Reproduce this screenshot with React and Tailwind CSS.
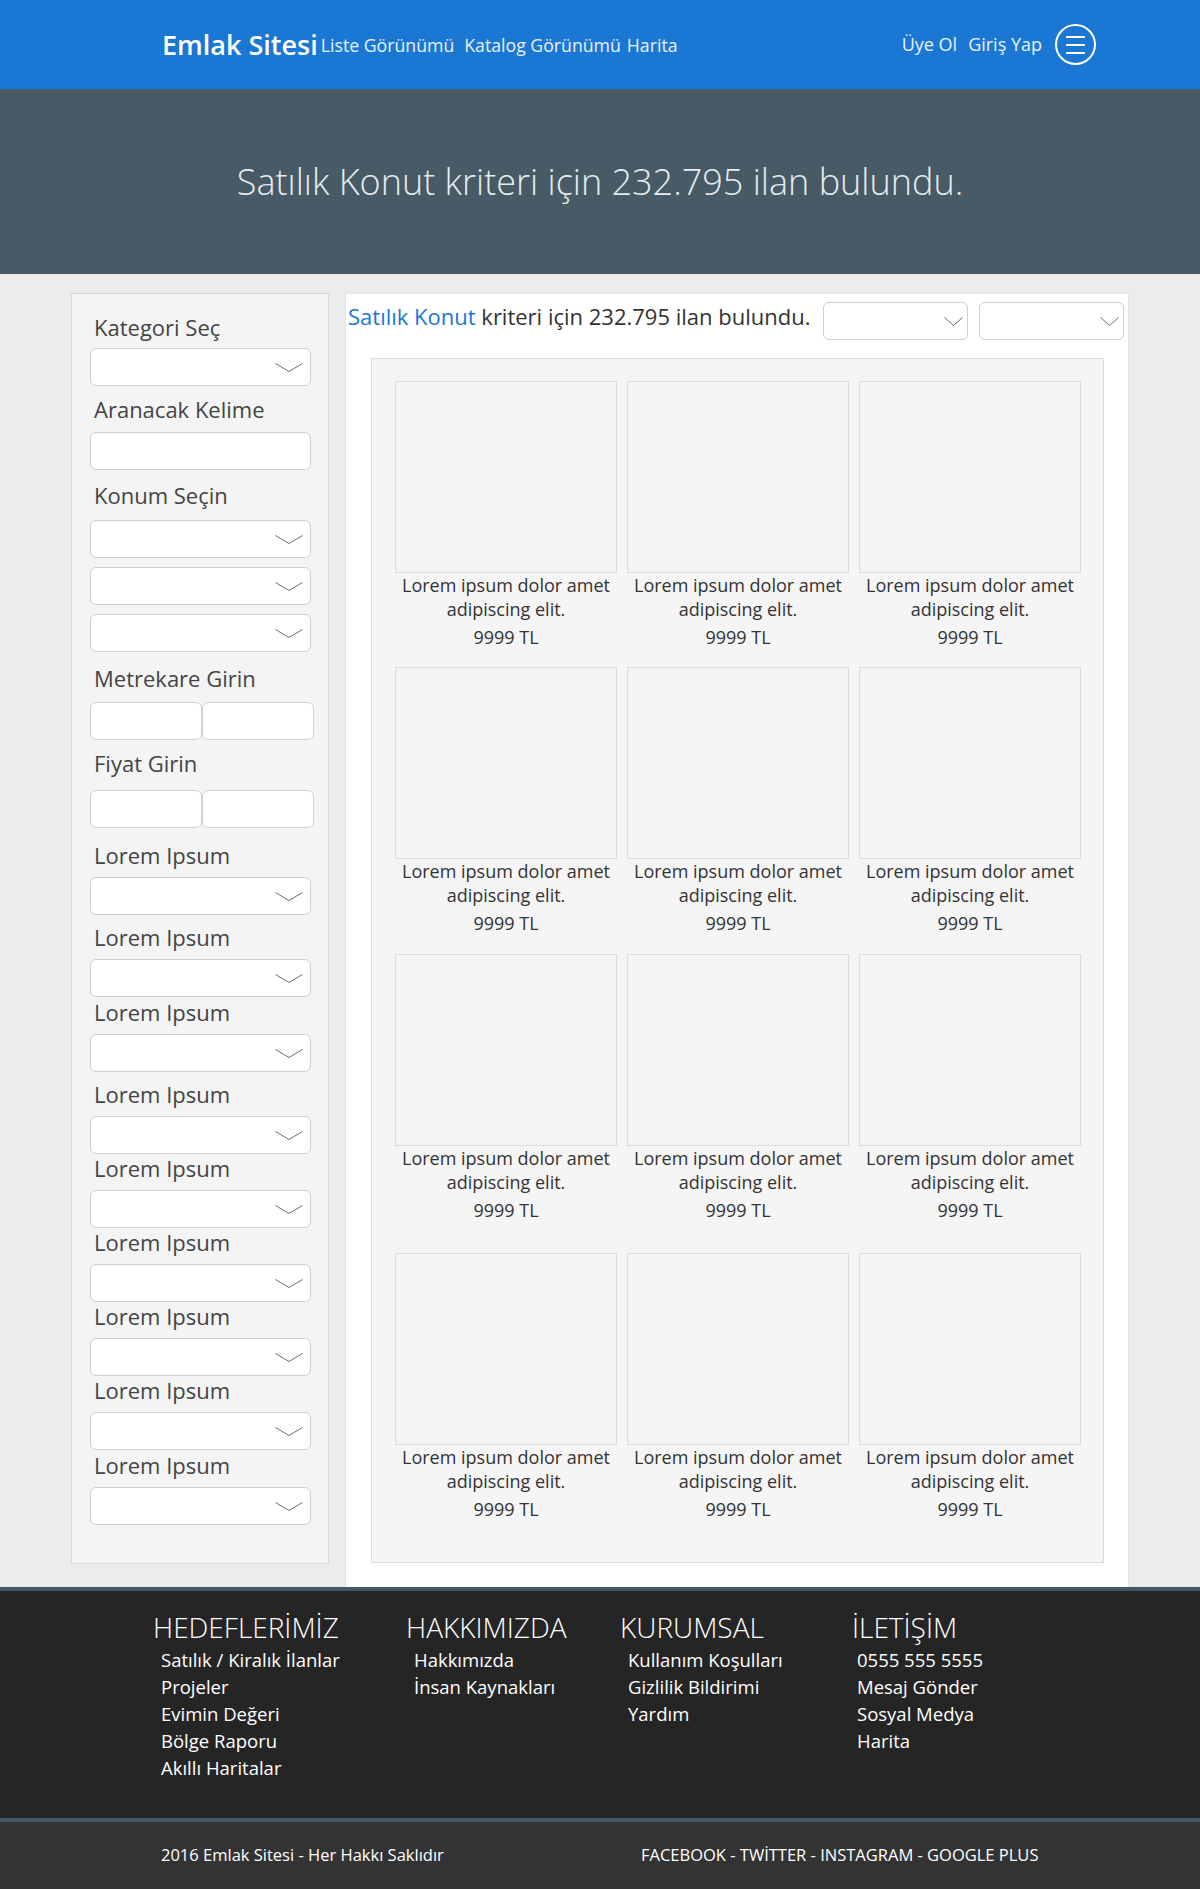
import React from 'react'

const Chevron = ({ w, h }) => (
  <svg width={w} height={h} viewBox={`0 0 ${w} ${h}`}>
    <polyline points={`0.5,0.5 ${w / 2},${h - 0.5} ${w - 0.5},0.5`} fill="none" stroke="#6b6b6b" strokeWidth="1" />
  </svg>
)

function Select({ className = '' }) {
  return (
    <div className={`h-[38px] w-[221px] bg-white border border-[#cfcfcf] rounded-[6px] flex items-center justify-end pr-[7px] ${className}`}>
      <Chevron w={28} h={9} />
    </div>
  )
}

function Label({ children, className = '' }) {
  return <div className={`h-[30px] leading-[30px] text-[22px] text-[#444] pl-[4px] ${className}`}>{children}</div>
}

const loremGaps = ['mt-[12px]', 'mt-[7px]', 'mt-0', 'mt-[7px]', 'mt-[-1px]', 'mt-[-1px]', 'mt-[-1px]', 'mt-[-1px]', 'mt-0']
const rowGaps = ['mt-0', 'mt-[18px]', 'mt-[19px]', 'mt-[31px]']

function Card() {
  return (
    <div className="w-[222px] text-center text-[#333]">
      <div className="h-[192px] border border-[#dcdcdc] bg-[#f5f5f5]" />
      <div className="text-[18px] leading-[24px]">
        <div>Lorem ipsum dolor amet</div>
        <div>adipiscing elit.</div>
      </div>
      <div className="mt-[4px] text-[18px] leading-[24px]">9999 TL</div>
    </div>
  )
}

export default function App() {
  return (
    <div className="w-[1200px] bg-[#ebecee] font-['Open_Sans',sans-serif]">
      {/* header */}
      <header className="h-[89px] bg-[#1a77d3] flex items-center pl-[162px] pr-[104px] text-white">
        <div className="text-[27px] font-semibold leading-none">Emlak Sitesi</div>
        <nav className="flex items-center ml-[3px] text-[17.7px] text-white/90 mt-[2px]">
          <span>Liste Görünümü</span>
          <span className="ml-[10px]">Katalog Görünümü</span>
          <span className="ml-[6px]">Harita</span>
        </nav>
        <div className="ml-auto flex items-center text-[18px] text-white/90">
          <span>Üye Ol</span>
          <span className="ml-[11px]">Giriş Yap</span>
          <div className="ml-[13px] w-[41px] h-[41px] rounded-full border-2 border-white flex flex-col items-center justify-center gap-[6px]">
            <div className="w-[19px] h-[2px] bg-white" />
            <div className="w-[19px] h-[2px] bg-white" />
            <div className="w-[19px] h-[2px] bg-white" />
          </div>
        </div>
      </header>

      {/* hero */}
      <section className="h-[185px] bg-[#475a65] flex items-center justify-center">
        <h1 className="text-[36px] font-light text-[#e6ecf0]">Satılık Konut kriteri için 232.795 ilan bulundu.</h1>
      </section>

      {/* content */}
      <div className="flex items-start pt-[19px] pl-[71px] gap-[16px]">
        <aside className="w-[258px] bg-[#f4f4f4] border border-[#dadada] pt-[18px] pb-[38px] pl-[18px]">
          <Label>Kategori Seç</Label>
          <Select className="mt-[6px]" />
          <Label className="mt-[8px]">Aranacak Kelime</Label>
          <div className="mt-[8px] h-[38px] w-[221px] bg-white border border-[#cfcfcf] rounded-[6px]" />
          <Label className="mt-[10px]">Konum Seçin</Label>
          <Select className="mt-[10px]" />
          <Select className="mt-[9px]" />
          <Select className="mt-[9px]" />
          <Label className="mt-[11px]">Metrekare Girin</Label>
          <div className="mt-[9px] flex">
            <div className="h-[38px] w-[112px] bg-white border border-[#cfcfcf] rounded-[6px]" />
            <div className="h-[38px] w-[112px] bg-white border border-[#cfcfcf] rounded-[6px]" />
          </div>
          <Label className="mt-[8px]">Fiyat Girin</Label>
          <div className="mt-[12px] flex">
            <div className="h-[38px] w-[112px] bg-white border border-[#cfcfcf] rounded-[6px]" />
            <div className="h-[38px] w-[112px] bg-white border border-[#cfcfcf] rounded-[6px]" />
          </div>
          {loremGaps.map((g, i) => (
            <div key={i} className={g}>
              <Label>Lorem Ipsum</Label>
              <Select className="mt-[7px]" />
            </div>
          ))}
        </aside>

        <main className="w-[784px] bg-white border border-[#e2e2e2] border-b-0 pb-[24px]">
          <div className="flex items-start pt-[8px] pl-[2px] pr-[4px]">
            <div className="mt-[-1px] h-[30px] leading-[30px] text-[22px] text-[#333]">
              <span className="text-[#1a77d3]">Satılık Konut</span> kriteri için 232.795 ilan bulundu.
            </div>
            <div className="ml-auto flex gap-[11px]">
              {[0, 1].map(i => (
                <div key={i} className="h-[38px] w-[145px] bg-white border border-[#cfcfcf] rounded-[6px] flex items-center justify-end pr-[4px]">
                  <Chevron w={19} h={9} />
                </div>
              ))}
            </div>
          </div>

          <div className="mt-[18px] ml-[25px] w-[733px] bg-[#f5f5f5] border border-[#dcdcdc] pt-[22px] pb-[41px] pl-[23px]">
            {rowGaps.map((g, r) => (
              <div key={r} className={`flex gap-[10px] ${g}`}>
                <Card />
                <Card />
                <Card />
              </div>
            ))}
          </div>
        </main>
      </div>

      {/* footer */}
      <footer className="bg-[#252525] border-t-4 border-[#46555f] text-white">
        <div className="flex pl-[153px] pt-[18px] pb-[37px]">
          <div className="w-[253px]">
            <h3 className="text-[28px] font-light leading-[36px]">HEDEFLERİMİZ</h3>
            <ul className="mt-[1px] pl-[8px] text-[18.5px] leading-[27px]">
              <li>Satılık / Kiralık İlanlar</li>
              <li>Projeler</li>
              <li>Evimin Değeri</li>
              <li>Bölge Raporu</li>
              <li>Akıllı Haritalar</li>
            </ul>
          </div>
          <div className="w-[214px]">
            <h3 className="text-[28px] font-light leading-[36px]">HAKKIMIZDA</h3>
            <ul className="mt-[1px] pl-[8px] text-[18.5px] leading-[27px]">
              <li>Hakkımızda</li>
              <li>İnsan Kaynakları</li>
            </ul>
          </div>
          <div className="w-[232px]">
            <h3 className="text-[28px] font-light leading-[36px]">KURUMSAL</h3>
            <ul className="mt-[1px] pl-[8px] text-[18.5px] leading-[27px]">
              <li>Kullanım Koşulları</li>
              <li>Gizlilik Bildirimi</li>
              <li>Yardım</li>
            </ul>
          </div>
          <div>
            <h3 className="text-[28px] font-light leading-[36px]">İLETİŞİM</h3>
            <ul className="mt-[1px] pl-[5px] text-[18.5px] leading-[27px]">
              <li>0555 555 5555</li>
              <li>Mesaj Gönder</li>
              <li>Sosyal Medya</li>
              <li>Harita</li>
            </ul>
          </div>
        </div>
      </footer>
      <div className="h-[71px] bg-[#333333] border-t-4 border-[#46555f] flex items-center pl-[161px] text-white text-[16.5px]">
        <span className="w-[480px]">2016 Emlak Sitesi - Her Hakkı Saklıdır</span>
        <span>FACEBOOK - TWİTTER - INSTAGRAM - GOOGLE PLUS</span>
      </div>
    </div>
  )
}
